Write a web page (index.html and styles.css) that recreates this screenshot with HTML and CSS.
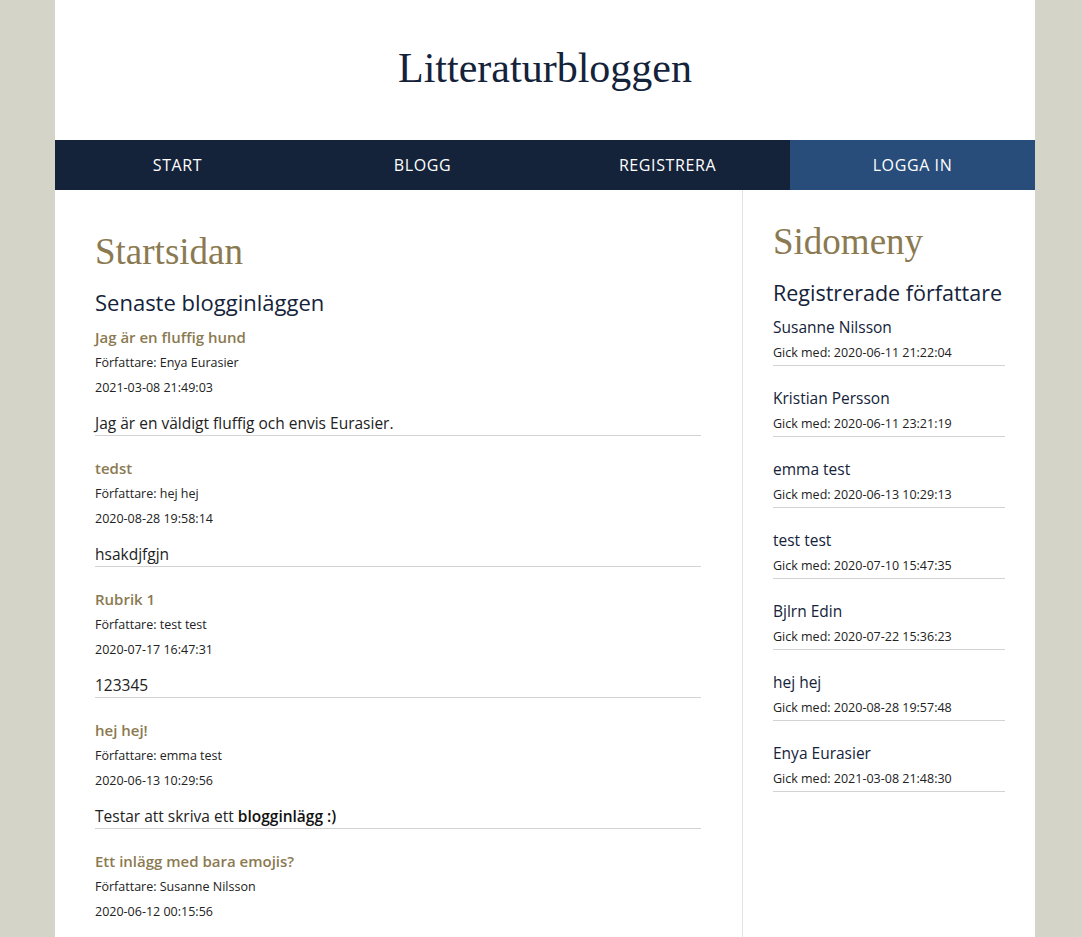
FILE: index.html
```html
<!DOCTYPE html>
<html lang="sv">
<head>
<meta charset="utf-8">
<title>Litteraturbloggen</title>
<link rel="stylesheet" href="styles.css">
</head>
<body>
<div class="page">
  <header class="site-header">
    <div class="site-title">Litteraturbloggen</div>
  </header>
  <nav class="nav">
    <a class="nav-item" href="#">START</a>
    <a class="nav-item" href="#">BLOGG</a>
    <a class="nav-item" href="#">REGISTRERA</a>
    <a class="nav-item nav-login" href="#">LOGGA IN</a>
  </nav>
  <div class="content">
    <main class="main">
      <h1 class="page-title">Startsidan</h1>
      <h2 class="section-title">Senaste blogginläggen</h2>
      <article class="post">
        <h3 class="post-title">Jag är en fluffig hund</h3>
        <p class="meta">Författare: Enya Eurasier</p>
        <p class="meta">2021-03-08 21:49:03</p>
        <p class="post-body">Jag är en väldigt fluffig och envis Eurasier.</p>
      </article>
      <article class="post">
        <h3 class="post-title">tedst</h3>
        <p class="meta">Författare: hej hej</p>
        <p class="meta">2020-08-28 19:58:14</p>
        <p class="post-body">hsakdjfgjn</p>
      </article>
      <article class="post">
        <h3 class="post-title">Rubrik 1</h3>
        <p class="meta">Författare: test test</p>
        <p class="meta">2020-07-17 16:47:31</p>
        <p class="post-body">123345</p>
      </article>
      <article class="post">
        <h3 class="post-title">hej hej!</h3>
        <p class="meta">Författare: emma test</p>
        <p class="meta">2020-06-13 10:29:56</p>
        <p class="post-body">Testar att skriva ett <strong>blogginlägg :)</strong></p>
      </article>
      <article class="post">
        <h3 class="post-title">Ett inlägg med bara emojis?</h3>
        <p class="meta">Författare: Susanne Nilsson</p>
        <p class="meta">2020-06-12 00:15:56</p>
        <p class="post-body">🐶🐶🐶</p>
      </article>
    </main>
    <aside class="sidebar">
      <h1 class="page-title">Sidomeny</h1>
      <h2 class="section-title">Registrerade författare</h2>
      <div class="author"><h3 class="author-name">Susanne Nilsson</h3><p class="meta">Gick med: 2020-06-11 21:22:04</p></div>
      <div class="author"><h3 class="author-name">Kristian Persson</h3><p class="meta">Gick med: 2020-06-11 23:21:19</p></div>
      <div class="author"><h3 class="author-name">emma test</h3><p class="meta">Gick med: 2020-06-13 10:29:13</p></div>
      <div class="author"><h3 class="author-name">test test</h3><p class="meta">Gick med: 2020-07-10 15:47:35</p></div>
      <div class="author"><h3 class="author-name">Bjlrn Edin</h3><p class="meta">Gick med: 2020-07-22 15:36:23</p></div>
      <div class="author"><h3 class="author-name">hej hej</h3><p class="meta">Gick med: 2020-08-28 19:57:48</p></div>
      <div class="author"><h3 class="author-name">Enya Eurasier</h3><p class="meta">Gick med: 2021-03-08 21:48:30</p></div>
    </aside>
  </div>
</div>
</body>
</html>
```
FILE: styles.css
```css
* { box-sizing: border-box; }
html { margin: 0; padding: 0; }
body {
  margin: 0 0 0 8px;
  padding: 0;
  background: #d5d4c8;
  font-family: "Open Sans", "Noto Sans", sans-serif;
  color: #1c1c1c;
}
.page {
  width: 980px;
  margin: 0 auto;
  background: #ffffff;
  min-height: 937px;
}
.site-header {
  height: 140px;
  display: flex;
  align-items: center;
  justify-content: center;
}
.site-title {
  font-family: "Liberation Serif", "DejaVu Serif", serif;
  font-size: 42px;
  color: #14233a;
  margin-top: -4px;
}
.nav {
  display: grid;
  grid-template-columns: repeat(4, 1fr);
  height: 50px;
  background: #14233a;
}
.nav-item {
  display: flex;
  align-items: center;
  justify-content: center;
  color: #ffffff;
  text-decoration: none;
  font-size: 16px;
  letter-spacing: 0.6px;
}
.nav-login { background: #284d7a; }
.content {
  display: grid;
  grid-template-columns: 688px 1fr;
}
.main {
  padding: 39px 41px 40px 40px;
  border-right: 1px solid #e2e2e2;
}
.sidebar {
  padding: 29px 30px 40px 30px;
}
.page-title {
  font-family: "Liberation Serif", "DejaVu Serif", serif;
  font-weight: normal;
  font-size: 37px;
  line-height: 46px;
  color: #8b7a51;
  margin: 0 0 12px;
}
.sidebar .page-title { margin-bottom: 13px; }
.section-title {
  font-size: 22px;
  line-height: 30px;
  font-weight: 500;
  color: #14233a;
  margin: 0 0 8px;
  white-space: nowrap;
}
.sidebar .section-title { margin-bottom: 7px; font-size: 21.5px; }
.post {
  border-bottom: 1px solid #d3d3d3;
  margin-bottom: 20px;
}
.post-title {
  font-size: 15px;
  line-height: 25px;
  font-weight: 600;
  color: #8b7a51;
  margin: 0;
}
.meta {
  font-size: 12.5px;
  line-height: 25px;
  margin: 0;
  color: #222;
}
.post-body {
  font-size: 15.5px;
  line-height: 24px;
  margin: 11px 0 0;
  color: #222;
}
.post-body strong { font-weight: 600; color: #111; }
.author {
  border-bottom: 1px solid #d3d3d3;
  margin-bottom: 20px;
}
.author-name {
  font-size: 15.5px;
  line-height: 25px;
  font-weight: 500;
  color: #14233a;
  margin: 0;
}
```
